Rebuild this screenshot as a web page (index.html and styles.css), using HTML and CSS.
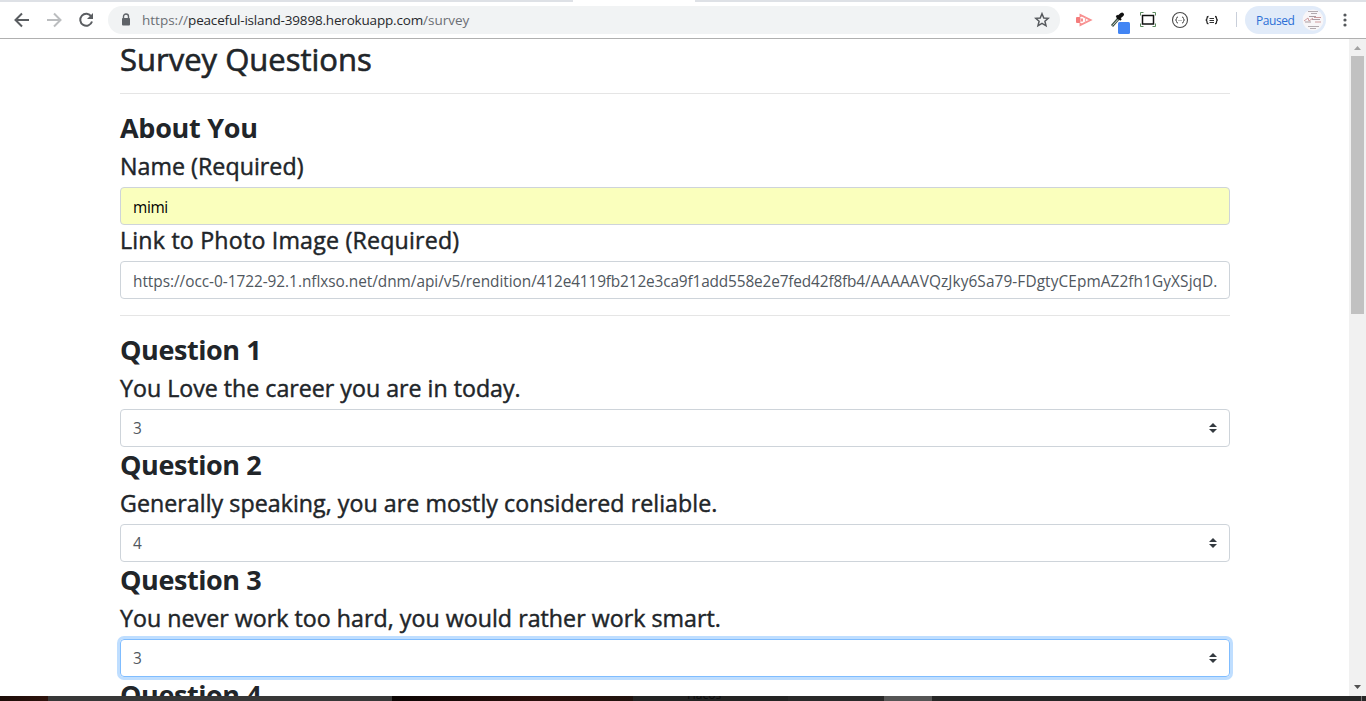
FILE: index.html
```html
<!DOCTYPE html>
<html lang="en">
<head>
<meta charset="utf-8">
<title>Survey</title>
<link rel="stylesheet" href="styles.css">
</head>
<body>
<div class="window">
  <div class="tabstrip"><div class="tab"></div></div>
  <header class="toolbar">
    <svg class="nav-icons" width="108" height="36" viewBox="0 3 108 36" fill="none" stroke-width="2">
      <path d="M29 20H16M22 13.5L15.5 20L22 26.5" stroke="#5a5d61"/>
      <path d="M47 20H60M54 13.5L60.500 20L54 26.500" stroke="#bbbdbf"/>
      <path d="M91.300 16.500A6 6 0 1 0 92 21.500" stroke="#5a5d61"/>
      <path d="M93 13V19H87Z" fill="#5a5d61"/>
    </svg>
    <div class="address">
      <svg class="lock" width="10" height="14" viewBox="0 0 10 14"><path d="M2.500 6V3.500a2.500 2.500 0 0 1 5 0V6" fill="none" stroke="#5f6368" stroke-width="1.400"/><rect x="1" y="5" width="8" height="7.500" rx="1" fill="#5f6368"/></svg>
      <span class="url"><span class="dim">https://</span>peaceful-island-39898.herokuapp.com<span class="dim">/survey</span></span>
      <svg class="star" width="16" height="16" viewBox="0 0 16 16"><path d="M8 1.700L9.800 6L14.300 6.300L10.900 9.300L12 13.800L8 11.400L4 13.800L5.100 9.300L1.700 6.300L6.200 6Z" fill="none" stroke="#56595d" stroke-width="1.500"/></svg>
    </div>
    <svg class="extensions" width="185" height="36" viewBox="1060 2 185 36" fill="none">
      <path d="M1080.500 17V15L1090.500 20L1080.500 25V23" stroke="#f88f8f" stroke-width="1.900"/>
      <path d="M1085.500 17.500v5" stroke="#f9a8a8" stroke-width="1.200"/>
      <rect x="1076" y="17" width="4.500" height="6" rx="1" fill="#f47c7c"/>
      <path d="M1082 18.500v3" stroke="#f88f8f" stroke-width="2"/>
      <path d="M1112 26L1119 18" stroke="#3b5044" stroke-width="2.800"/>
      <path d="M1112.500 25.500L1118.500 19" stroke="#cfd8d2" stroke-width="1"/>
      <path d="M1116.500 15.500L1121 20" stroke="#111" stroke-width="2.200"/>
      <path d="M1118.500 17.500L1122 14.500" stroke="#111" stroke-width="4" stroke-linecap="round"/>
      <rect x="1118" y="22" width="12" height="12" rx="1.500" fill="#4285f4"/>
      <rect x="1142.500" y="15.500" width="11" height="8.500" stroke="#111" stroke-width="1.500"/>
      <path d="M1140.500 15.500V12.500H1143.500M1152.500 12.500h3V15.500M1140.500 23.500v3h3M1152.500 26.500h3V23.500" stroke="#5b8a5e"/>
      <circle cx="1180" cy="20" r="7.500" stroke="#4b4b4b" stroke-width="1.100"/>
      <path d="M1178 17q-1.500 0-1.500 1.500T1175.500 20q1 0 1 1.500t1.500 1.500M1182 17q1.500 0 1.500 1.500T1184.500 20q-1 0-1 1.500t-1.500 1.500" stroke="#444"/>
      <path d="M1178.500 20.500h3" stroke="#777" stroke-dasharray="1 1"/>
      <path d="M1208.500 16.500q-1.500 0-1.500 1.700T1205.700 20.200q1.300 0 1.300 1.800t1.500 1.700M1215 16.500q1.500 0 1.500 1.700T1217.800 20.200q-1.300 0-1.300 1.800t-1.500 1.700" stroke="#222" stroke-width="1.300"/>
      <path d="M1209.500 18.500h4.500M1209.500 20.500h4.500M1209.500 22.500h4.500" stroke="#333"/>
      <path d="M1236.500 12v15" stroke="#c9cfda"/>
    </svg>
    <div class="profile">
      <span class="paused">Paused</span>
      <svg width="22" height="22" viewBox="0 0 22 22" fill="none"><circle cx="11" cy="11" r="10.500" fill="#f8f6f8"/><path d="M6 2.500h10M9 4.500h6M6 17.500h11M8 19.500h6" stroke="#b3abb0"/><path d="M2 12l4-3 1 3 4-3M12 8.500h7M13 13h6" stroke="#cf9c9e"/><path d="M7 7.500h7M3 13h6M10 10.500h8" stroke="#ab9da2"/></svg>
    </div>
    <svg class="kebab" width="8" height="16" viewBox="0 0 8 16" fill="#55585c"><circle cx="4" cy="3" r="1.600"/><circle cx="4" cy="8" r="1.600"/><circle cx="4" cy="13" r="1.600"/></svg>
  </header>
  <div class="viewport">
    <main class="container">
      <h2><span class="t-title">Survey Questions</span></h2>
      <hr>
      <h3><span class="t-about">About You</span></h3>
      <h4><span class="t-name">Name (Required)</span></h4>
      <div class="control autofill"><span class="t-mimi">mimi</span></div>
      <h4><span class="t-link">Link to Photo Image (Required)</span></h4>
      <div class="control"><span class="t-url"><span class="u1">https://occ-0-1722-92.1.nflxso.net/dnm/api/v5/rendition/</span><span class="u2">412e4119fb212e3ca9f1add558e2e7fed42f8fb4/</span><span class="u3">AAAAAVQzJky6Sa79-FDgtyCEpmAZ2fh1GyXSjqD.</span></span></div>
      <hr>
      <h3><span class="t-q">Question 1</span></h3>
      <h4><span class="t-q1">You Love the career you are in today.</span></h4>
      <div class="control select"><span>3</span><svg width="8" height="10" viewBox="0 0 8 10"><path d="M0 4L4 0L8 4ZM0 6H8L4 10Z" fill="#343a40"/></svg></div>
      <h3><span class="t-q">Question 2</span></h3>
      <h4><span class="t-q2">Generally speaking, you are mostly considered reliable.</span></h4>
      <div class="control select"><span>4</span><svg width="8" height="10" viewBox="0 0 8 10"><path d="M0 4L4 0L8 4ZM0 6H8L4 10Z" fill="#343a40"/></svg></div>
      <h3><span class="t-q">Question 3</span></h3>
      <h4><span class="t-q3">You never work too hard, you would rather work smart.</span></h4>
      <div class="control select focused"><span>3</span><svg width="8" height="10" viewBox="0 0 8 10"><path d="M0 4L4 0L8 4ZM0 6H8L4 10Z" fill="#343a40"/></svg></div>
      <h3><span class="t-q">Question 4</span></h3>
    </main>
    <div class="scrollbar">
      <svg width="17" height="17" viewBox="0 0 17 17"><path d="M5 11L8.500 7L12 11Z" fill="#a3a3a3"/></svg>
      <div class="thumb"></div>
      <svg width="17" height="17" viewBox="0 0 17 17"><path d="M5 6L8.500 10L12 6Z" fill="#505050"/></svg>
    </div>
  </div>
  <footer class="taskbar"><i class="a"></i><i class="b"></i><i class="c"></i><i class="d"><span>Hacos</span></i><i class="e"></i><i class="f"></i><i class="g"></i></footer>
</div>
</body>
</html>
```
FILE: styles.css
```css
* { box-sizing: border-box; }
body { margin: 0; background: #fff; color: #212529; font-family: "Open Sans", "Noto Sans", sans-serif; overflow: hidden; }
.window { display: flex; flex-direction: column; width: 1366px; height: 701px; }
svg { display: block; flex: none; }

.tabstrip { height: 2px; background: #dee1e6; flex: none; }
.tab { width: 122px; height: 2px; margin-left: 573px; background: #fff; }
.toolbar { display: flex; align-items: center; height: 37px; flex: none; border-bottom: 1px solid #b0b0b0; background: #fff; }
.nav-icons { margin-top: 1px; }
.address { display: flex; align-items: center; width: 952px; height: 28px; border-radius: 14px; background: #f1f3f4; padding: 0 10px 0 13px; }
.url { margin-left: 11px; padding-bottom: 1px; flex: 1; font-size: 13.5px; line-height: 20px; letter-spacing: -0.18px; color: #27292c; white-space: nowrap; }
.dim { color: #6b6f74; letter-spacing: 0; }
.profile { display: flex; align-items: center; width: 81px; height: 28px; border-radius: 14px; background: #e1ebf9; padding-left: 11px; }
.paused { width: 46px; padding-top: 1px; font-size: 12px; line-height: 20px; letter-spacing: -0.45px; color: #2b6fd6; }
.kebab { margin-left: 15px; }

.viewport { display: flex; flex: 1; min-height: 0; overflow: hidden; }
.container { width: 1110px; margin-left: 120px; }
h2, h3, h4 { margin: 0 0 8px; white-space: nowrap; font-weight: 400; }
h2 { height: 38px; padding-top: 1px; font-size: 31px; line-height: 38px; -webkit-text-stroke: 0.6px #212529; }
h3 { height: 33px; padding-top: 1px; font-size: 27px; line-height: 33px; font-weight: 700; }
h4 { height: 28px; padding-top: 1px; font-size: 23.2px; line-height: 28px; -webkit-text-stroke: 0.45px #212529; }
hr { margin: 16px 0; border: 0; border-top: 1px solid #e5e5e5; }
.control { display: flex; align-items: center; width: 1110px; height: 38px; padding: 0 12px; border: 1px solid #ced4da; border-radius: 4px; font-size: 15.4px; line-height: 24px; color: #50575e; white-space: nowrap; }
.control > span { padding-top: 4px; }
.autofill { background: #faffbd; color: #000; }
.select { justify-content: space-between; }
.select > span { padding-top: 2px; }
.focused { border-color: #80bdff; box-shadow: 0 0 0 3px #bfdeff; }

.t-title { letter-spacing: 0; }
.t-about { letter-spacing: -0.27px; }
.t-name { letter-spacing: 0.05px; }
.t-mimi { letter-spacing: -0.35px; }
.t-link { letter-spacing: 0.2px; }
.t-q { letter-spacing: -0.42px; }
.t-q1 { letter-spacing: 0; }
.t-q2 { letter-spacing: 0.05px; }
.t-q3 { letter-spacing: 0.03px; }
.u1 { letter-spacing: -0.04px; }
.u2 { letter-spacing: -0.15px; }
.u3 { letter-spacing: 0.09px; }

.scrollbar { display: flex; flex-direction: column; width: 17px; margin-left: auto; background: #f1f1f1; }
.thumb { width: 13px; height: 258px; margin: 0 2px auto; background: #c1c1c1; }

.taskbar { display: flex; height: 5px; flex: none; overflow: hidden; background: #262626; }
.taskbar i { display: block; height: 5px; }
.a { width: 48px; background: linear-gradient(90deg, #1c0c08, #2e130c); }
.b { width: 344px; background: #373737; }
.c { width: 241px; background: linear-gradient(90deg, #0c0504, #2a0f0b 60%, #21130e); }
.d { width: 155px; background: #232323; overflow: hidden; }
.d span { display: block; margin: -8px 0 0 54px; font-size: 12px; line-height: 13px; font-style: normal; color: #0b0b0b; }
.e { width: 96px; background: #292929; }
.f { width: 48px; background: #555; }
.g { flex: 1; border-right: 1px solid #777; margin-right: 4px; }
```
